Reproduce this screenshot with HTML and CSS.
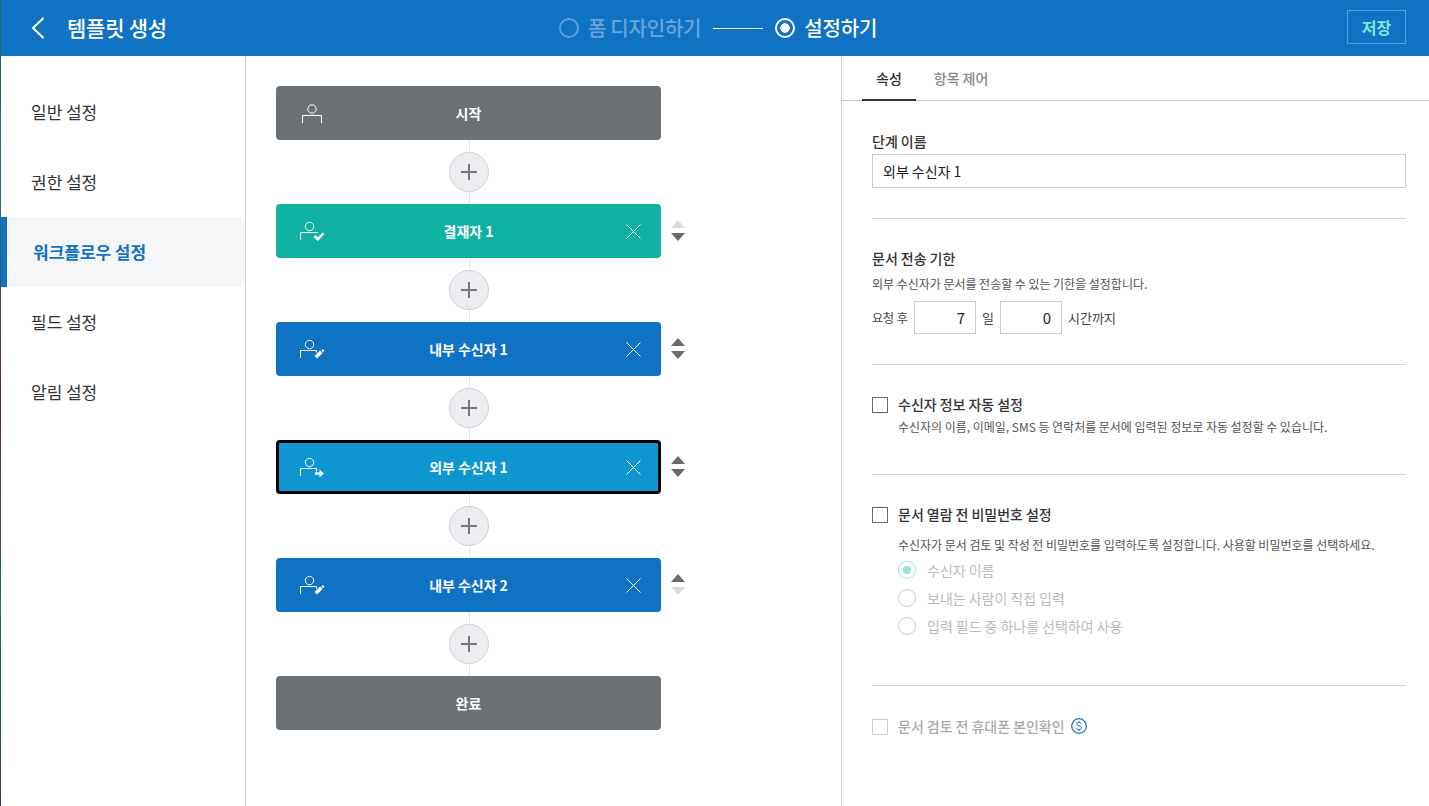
FILE: index.html
```html
<!DOCTYPE html>
<html lang="ko">
<head>
<meta charset="utf-8">
<title>템플릿 생성</title>
<link rel="stylesheet" href="styles.css">
</head>
<body>
<div class="app">
  <header class="topbar">
    <div class="title-group">
      <svg class="back" width="14" height="22" viewBox="0 0 14 22"><path d="M12.5 1 2 11l10.500 10" fill="none" stroke="#fff" stroke-width="2"/></svg>
      <h1 class="title">템플릿 생성</h1>
    </div>
    <div class="steps">
      <span class="step-radio step-radio-off"></span>
      <span class="step-label step-label-off">폼 디자인하기</span>
      <span class="step-line"></span>
      <span class="step-radio step-radio-on"></span>
      <span class="step-label">설정하기</span>
    </div>
    <button class="save">저장</button>
  </header>
  <div class="main">
    <nav class="sidebar">
      <a class="nav-item">일반 설정</a>
      <a class="nav-item">권한 설정</a>
      <a class="nav-item nav-active">워크플로우 설정</a>
      <a class="nav-item">필드 설정</a>
      <a class="nav-item">알림 설정</a>
    </nav>
    <section class="flow">
      <div class="row">
        <div class="block block-gray">
          <svg class="person" width="28" height="24" viewBox="0 0 28 24" fill="none" stroke="#fff"><circle cx="14" cy="8" r="4.200"/><path d="M4.500 22v-7.500h19V22"/></svg>
          <span class="block-name">시작</span>
        </div>
      </div>
      <div class="link"><button class="add"><svg width="16" height="16" viewBox="0 0 16 16"><path d="M8 0v16M0 8h16" stroke="#777" stroke-width="2"/></svg></button></div>
      <div class="row">
        <div class="block block-teal">
          <svg class="person" width="28" height="24" viewBox="0 0 28 24" fill="none" stroke="#fff"><circle cx="11.500" cy="7.500" r="4.200"/><path d="M2.500 21v-7.500H20"/><path d="m16.500 17 3.200 3.200 5.800-5.800" stroke-width="2.600"/></svg>
          <span class="block-name">결재자 1</span>
          <svg class="close" width="15" height="15" viewBox="0 0 15 15"><path d="m.5.5 14 14M14.500.5l-14 14" stroke="#fff" stroke-width="1"/></svg>
        </div>
        <div class="order"><span class="tri-up tri-off"></span><span class="tri-down"></span></div>
      </div>
      <div class="link"><button class="add"><svg width="16" height="16" viewBox="0 0 16 16"><path d="M8 0v16M0 8h16" stroke="#777" stroke-width="2"/></svg></button></div>
      <div class="row">
        <div class="block block-blue">
          <svg class="person" width="28" height="24" viewBox="0 0 28 24" fill="none" stroke="#fff"><circle cx="11.500" cy="7.500" r="4.200"/><path d="M2.500 21v-7.500h16v2"/><path d="m17.800 20.300 5.500-5.500" stroke-width="3.600"/><path d="m24.800 12 1.700 1.700-1.500 1.500-1.700-1.700z" fill="#fff" stroke="none"/></svg>
          <span class="block-name">내부 수신자 1</span>
          <svg class="close" width="15" height="15" viewBox="0 0 15 15"><path d="m.5.5 14 14M14.500.5l-14 14" stroke="#fff" stroke-width="1"/></svg>
        </div>
        <div class="order"><span class="tri-up"></span><span class="tri-down"></span></div>
      </div>
      <div class="link"><button class="add"><svg width="16" height="16" viewBox="0 0 16 16"><path d="M8 0v16M0 8h16" stroke="#777" stroke-width="2"/></svg></button></div>
      <div class="row">
        <div class="block block-sky block-selected">
          <svg class="person" width="28" height="24" viewBox="0 0 28 24" fill="none" stroke="#fff"><circle cx="11.500" cy="7.500" r="4.200"/><path d="M2.500 21v-7.500h16v3"/><path d="M17 18.500h6" stroke-width="2.400"/><path d="m21.500 14.500 4.500 4-4.500 4z" fill="#fff" stroke="none"/></svg>
          <span class="block-name">외부 수신자 1</span>
          <svg class="close" width="15" height="15" viewBox="0 0 15 15"><path d="m.5.5 14 14M14.500.5l-14 14" stroke="#fff" stroke-width="1"/></svg>
        </div>
        <div class="order"><span class="tri-up"></span><span class="tri-down"></span></div>
      </div>
      <div class="link"><button class="add"><svg width="16" height="16" viewBox="0 0 16 16"><path d="M8 0v16M0 8h16" stroke="#777" stroke-width="2"/></svg></button></div>
      <div class="row">
        <div class="block block-blue">
          <svg class="person" width="28" height="24" viewBox="0 0 28 24" fill="none" stroke="#fff"><circle cx="11.500" cy="7.500" r="4.200"/><path d="M2.500 21v-7.500h16v2"/><path d="m17.800 20.300 5.500-5.500" stroke-width="3.600"/><path d="m24.800 12 1.700 1.700-1.500 1.500-1.700-1.700z" fill="#fff" stroke="none"/></svg>
          <span class="block-name">내부 수신자 2</span>
          <svg class="close" width="15" height="15" viewBox="0 0 15 15"><path d="m.5.5 14 14M14.500.5l-14 14" stroke="#fff" stroke-width="1"/></svg>
        </div>
        <div class="order"><span class="tri-up"></span><span class="tri-down tri-off"></span></div>
      </div>
      <div class="link"><button class="add"><svg width="16" height="16" viewBox="0 0 16 16"><path d="M8 0v16M0 8h16" stroke="#777" stroke-width="2"/></svg></button></div>
      <div class="row">
        <div class="block block-gray"><span class="block-name">완료</span></div>
      </div>
    </section>
    <aside class="panel">
      <div class="tabs">
        <a class="tab tab-active">속성</a>
        <a class="tab">항목 제어</a>
      </div>
      <div class="sec sec-name">
        <div class="label">단계 이름</div>
        <div class="text-input">외부 수신자 1</div>
      </div>
      <div class="sec sec-limit">
        <div class="label">문서 전송 기한</div>
        <div class="desc desc-limit">외부 수신자가 문서를 전송할 수 있는 기한을 설정합니다.</div>
        <div class="limit-row">
          <span class="limit-before">요청 후</span>
          <span class="num-input">7</span>
          <span class="limit-day">일</span>
          <span class="num-input">0</span>
          <span class="limit-after">시간까지</span>
        </div>
      </div>
      <div class="sec sec-auto">
        <div class="check-row"><span class="check"></span><span class="label">수신자 정보 자동 설정</span></div>
        <div class="desc desc-indent desc-auto">수신자의 이름, 이메일, SMS 등 연락처를 문서에 입력된 정보로 자동 설정할 수 있습니다.</div>
      </div>
      <div class="sec sec-pass">
        <div class="check-row"><span class="check"></span><span class="label">문서 열람 전 비밀번호 설정</span></div>
        <div class="desc desc-indent desc-pass">수신자가 문서 검토 및 작성 전 비밀번호를 입력하도록 설정합니다. 사용할 비밀번호를 선택하세요.</div>
        <div class="radios">
          <div class="radio-row"><span class="radio radio-on"></span><span>수신자 이름</span></div>
          <div class="radio-row"><span class="radio"></span><span>보내는 사람이 직접 입력</span></div>
          <div class="radio-row"><span class="radio"></span><span>입력 필드 중 하나를 선택하여 사용</span></div>
        </div>
      </div>
      <div class="sec sec-phone">
        <div class="check-row">
          <span class="check check-off"></span><span class="label label-off">문서 검토 전 휴대폰 본인확인</span>
          <svg class="coin" width="16" height="16" viewBox="0 0 16 16" fill="none" stroke="#0f72c3"><circle cx="8" cy="8" r="7.300" stroke-width="1.200"/><path d="M10.200 5.800C10 4.800 9 4.400 8 4.400c-1.200 0-2.200.6-2.200 1.700 0 2.300 4.500 1.300 4.500 3.700 0 1.100-1 1.800-2.300 1.800-1.200 0-2.200-.6-2.400-1.700M8 3v1.400M8 11.600V13" stroke-width="1"/></svg>
        </div>
      </div>
    </aside>
  </div>
</div>
</body>
</html>
```
FILE: styles.css
```css
* { box-sizing: border-box; word-spacing: -0.065em; }
html, body { height: 100%; }
body {
  margin: 0;
  padding-left: 1px;
  overflow: hidden;
  background: linear-gradient(#1c6b5a 0%, #1d6f8a 25%, #6a2a25 50%, #22705f 75%, #30405a 100%);
  font-family: "Noto Sans CJK KR", "Noto Sans", sans-serif;
  color: #333;
}
.app { height: 100%; display: flex; flex-direction: column; background: #fff; }

.topbar {
  height: 56px;
  flex: none;
  background: #0f72c3;
  display: grid;
  grid-template-columns: 558px auto 1fr;
  align-items: center;
  padding-right: 23px;
  color: #fff;
}
.title-group { display: flex; align-items: center; padding-left: 30px; }
.back { flex: none; }
.title { margin: 0 0 2px 22px; font-size: 21px; font-weight: 500; line-height: 28px; letter-spacing: -0.2px; }
.steps { display: flex; align-items: center; }
.step-radio { width: 20px; height: 20px; border-radius: 50%; flex: none; }
.step-radio-off { border: 2px solid #5f9fd8; }
.step-radio-on { border: 2px solid #fff; background: radial-gradient(circle, #fff 0 4.500px, transparent 5px); }
.step-label { margin-left: 9px; font-size: 20px; font-weight: 500; line-height: 28px; letter-spacing: -0.2px; }
.step-label-off { color: #6aa5db; }
.step-line { width: 50px; height: 1px; margin: 0 12px; background: #fff; }
.save {
  justify-self: end;
  width: 59px;
  height: 34px;
  margin-bottom: 2px;
  padding: 0;
  border: 1px solid #48a6e0;
  background: transparent;
  color: #7ce8e8;
  font: 700 16px/1 "Noto Sans CJK KR", sans-serif;
}

.main { flex: 1; display: flex; min-height: 0; }
.sidebar { width: 245px; flex: none; padding-top: 21px; border-right: 1px solid #ccc; }
.nav-item {
  height: 70px;
  display: flex;
  align-items: center;
  padding-left: 30px;
  padding-bottom: 1px;
  font-size: 17px;
  color: #333;
}
.nav-active {
  padding-left: 26px;
  border-left: 6px solid #0f72c3;
  background: #f5f6f8;
  color: #0f72c3;
  font-weight: 700;
}

.flow { width: 596px; flex: none; padding: 30px 0 0 30px; border-right: 1px solid #ccc; }
.row { display: flex; align-items: center; gap: 10px; }
.block {
  width: 385px;
  height: 54px;
  flex: none;
  display: flex;
  align-items: center;
  position: relative;
  justify-content: center;
  border-radius: 4px;
  color: #fff;
}
.block-gray { background: #6b7174; }
.block-teal { background: #10b1a3; }
.block-blue { background: #0f72c3; }
.block-sky { background: #0d96cf; }
.block-selected { border: 3px solid #000; }
.block-name { font-size: 14px; font-weight: 700; line-height: 20px; }
.person { position: absolute; left: 22px; top: 15px; }
.block-selected .person { left: 19px; top: 12px; }
.close { position: absolute; right: 20px; top: 20px; }
.block-selected .close { right: 17px; top: 17px; }
.order { display: flex; flex-direction: column; gap: 5px; margin-top: -1px; }
.tri-up, .tri-down { width: 0; height: 0; border-left: 7px solid transparent; border-right: 7px solid transparent; }
.tri-up { border-bottom: 8px solid #6b6b6b; }
.tri-down { border-top: 8px solid #6b6b6b; }
.tri-up.tri-off { border-bottom-color: #dcdcdc; }
.tri-down.tri-off { border-top-color: #dcdcdc; }

.link {
  width: 385px;
  height: 64px;
  position: relative;
  display: flex;
  align-items: center;
  justify-content: center;
}
.link::before {
  content: "";
  position: absolute;
  left: 193px;
  top: 0;
  bottom: 0;
  width: 1px;
  background: #e4e4e4;
}
.add {
  width: 40px;
  height: 40px;
  padding: 0;
  position: relative;
  display: flex;
  align-items: center;
  justify-content: center;
  border: 1px solid #d2d2d2;
  border-radius: 50%;
  background: #ebedf0;
}

.panel { flex: 1; min-width: 0; }
.tabs { height: 45px; display: flex; gap: 4px; padding-left: 20px; border-bottom: 1px solid #ccc; }
.tab {
  height: 45px;
  padding: 0 14px 2px;
  display: flex;
  align-items: center;
  font-size: 14px;
  font-weight: 500;
  color: #888;
}
.tab-active { color: #333; border-bottom: 2px solid #333; padding-bottom: 0; }
.sec { margin: 0 23px 0 30px; border-bottom: 1px solid #d5d5d5; }
.label { font-size: 14px; font-weight: 500; line-height: 20px; color: #333; }
.desc { font-size: 12px; line-height: 18px; color: #555; }
.desc-indent { margin-left: 26px; }

.sec-name { padding: 30px 0 30px; }
.text-input {
  height: 34px;
  margin-top: 3px;
  padding-left: 10px;
  display: flex;
  align-items: center;
  border: 1px solid #ccc;
  font-size: 14px;
  color: #222;
}
.sec-limit { padding: 29px 0 30px; }
.desc-limit { margin-top: 7px; }
.limit-row { display: flex; align-items: center; margin-top: 8px; font-size: 12px; color: #444; }
.limit-before { width: 42px; }
.limit-day { width: 24px; text-align: center; font-size: 13px; }
.limit-after { margin-left: 6px; font-size: 13px; }
.num-input {
  width: 62px;
  height: 33px;
  padding-right: 10px;
  display: flex;
  align-items: center;
  justify-content: flex-end;
  border: 1px solid #ccc;
  font-size: 15px;
  color: #222;
}
.check-row { height: 20px; display: flex; align-items: flex-start; gap: 10px; }
.check-row .label { line-height: 18px; }
.check { width: 16px; height: 16px; flex: none; margin-top: 2px; border: 1px solid #666; }
.check-off { border-color: #ccc; }
.check-row .label-off { color: #aaa; }
.sec-auto { padding: 30px 0 38px; }
.desc-auto { margin-top: 3px; }
.sec-pass { padding: 30px 0 45px; }
.desc-pass { margin-top: 11px; }
.radios { margin-top: 2px; margin-left: 26px; }
.radio-row { height: 28px; display: flex; align-items: center; gap: 11px; font-size: 14px; color: #bbb; }
.radio { width: 18px; height: 18px; flex: none; border: 1px solid #ccc; border-radius: 50%; }
.radio-on { border-color: #a3e2db; background: radial-gradient(circle, #a3e2db 0 4px, transparent 4.500px); }
.sec-phone { padding-top: 31px; border-bottom: 0; }
.coin { margin: 1px 0 0 -4px; flex: none; }
```
